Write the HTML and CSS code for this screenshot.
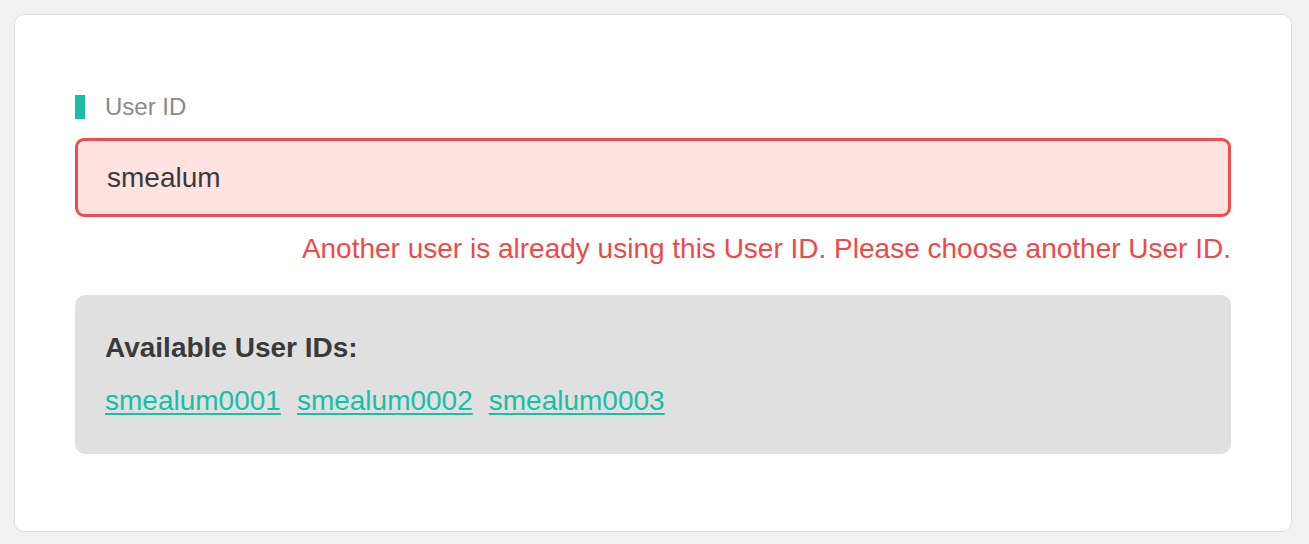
FILE: index.html
```html
<!DOCTYPE html>
<html lang="en">
<head>
<meta charset="utf-8">
<title>User ID</title>
<link rel="stylesheet" href="styles.css">
</head>
<body>
<div class="card">
  <div class="field-label"><span class="bar"></span><span class="label-text">User ID</span></div>
  <div class="input error">smealum</div>
  <p class="error-msg">Another user is already using this User ID. Please choose another User ID.</p>
  <div class="suggest">
    <h3 class="suggest-title">Available User IDs:</h3>
    <div class="suggest-links">
      <a href="#">smealum0001</a>
      <a href="#">smealum0002</a>
      <a href="#">smealum0003</a>
    </div>
  </div>
</div>
</body>
</html>
```

FILE: styles.css
```css
html, body {
  background: #f1f1f1;
}
body {
  margin: 14px 17px 13px 14px;
  font-family: "Liberation Sans", Arial, sans-serif;
  color: #3a3a3a;
}
.card {
  background: #fff;
  border: 1px solid #dedede;
  border-radius: 10px;
  padding: 78px 60px 77px 60px;
}
.field-label {
  display: flex;
  align-items: center;
  gap: 20px;
  height: 28px;
}
.bar {
  width: 10px;
  height: 24px;
  background: #17bfa5;
}
.label-text {
  font-size: 24px;
  color: #8a8a8a;
}
.input {
  margin-top: 17px;
  height: 73px;
  border: 3px solid #f24b4b;
  border-radius: 9px;
  background: #ffe3e3;
  display: flex;
  align-items: center;
  padding: 0 29px;
  font-size: 28px;
  color: #3a3a3a;
}
.error-msg {
  margin: 16px 0 0 0;
  text-align: right;
  font-size: 28px;
  line-height: 32px;
  color: #f04848;
}
.suggest {
  margin-top: 30px;
  background: #e0e0e0;
  border-radius: 10px;
  padding: 37px 30px 37px;
}
.suggest-title {
  margin: 0 0 21px 0;
  font-size: 28px;
  line-height: 32px;
  font-weight: bold;
  color: #3a3a3a;
}
.suggest-links {
  display: flex;
  gap: 16px;
  font-size: 28px;
  line-height: 32px;
}
.suggest-links a {
  color: #17bfa5;
  text-decoration: underline;
  text-underline-offset: 3px;
}
```
